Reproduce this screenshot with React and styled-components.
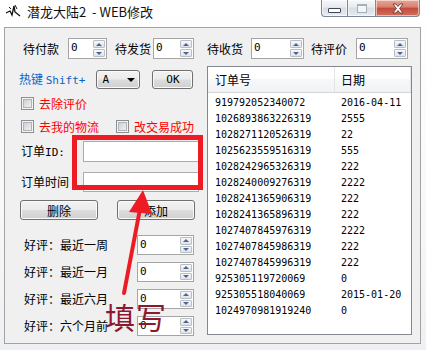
import styled, { createGlobalStyle } from "styled-components";

const GlobalStyle = createGlobalStyle`
  body {
    margin: 0;
    background: #ffffff;
    font-family: "Noto Sans CJK SC", "DejaVu Sans", sans-serif;
  }
`

const cjk = `"Noto Sans CJK SC", "DejaVu Sans", sans-serif`
const mono = `"DejaVu Sans Mono", "Liberation Mono", monospace`

const Window = styled.div`
  position: relative;
  width: 426px;
  height: 350px;
  overflow: hidden;
  display: flex;
  flex-direction: column;
  background: linear-gradient(#ffffff 0%, #f7f8fa 60%, #eef0f3 100%);
`

const TitleBar = styled.div`
  height: 27px;
  display: flex;
  align-items: flex-start;
  padding-left: 5px;
`

const Title = styled.div`
  margin-left: 6px;
  font-family: ${cjk};
  font-size: 13px;
  line-height: 24px;
  color: #111;
  text-shadow: 0 0 6px #fff;
  white-space: pre;
`

const Controls = styled.div`
  margin-left: auto;
  margin-right: 6px;
  display: flex;
  height: 17px;
`

const CtlBtn = styled.div`
  width: ${p => p.$w}px;
  height: 17px;
  box-sizing: border-box;
  display: flex;
  align-items: center;
  justify-content: center;
  border: 1px solid #7d8696;
  border-top: none;
  border-left-width: ${p => (p.$first ? 1 : 0)}px;
  border-radius: ${p => (p.$first ? "0 0 0 4px" : p.$close ? "0 0 4px 0" : "0")};
  background: ${p =>
    p.$close
      ? "linear-gradient(#e8a594 0%, #d7806f 45%, #c4493a 50%, #d1705c 100%)"
      : "linear-gradient(#f6f8fa 0%, #e6ebf0 45%, #d6dde5 50%, #e7ecf1 100%)"};
  box-shadow: inset 0 0 0 1px rgba(255, 255, 255, 0.55);
`

const MinGlyph = styled.span`
  width: 11px;
  height: 3px;
  margin-top: 5px;
  background: #fff;
  border: 1px solid #3c4656;
  border-radius: 1px;
`

const MaxGlyph = styled.span`
  width: 8px;
  height: 6px;
  border: 1px solid #a7afba;
  border-top-width: 2px;
  background: #f3f5f7;
`

const Client = styled.div`
  box-sizing: border-box;
  height: 317px;
  margin: 0 5px 0 4px;
  border: 1px solid #a3a3a3;
  background: #f0f0f0;
  display: flex;
  flex-direction: column;
`

const TopRow = styled.div`
  margin-top: 10px;
  padding-left: 18px;
  display: flex;
  align-items: center;
`

const Label = styled.span`
  font-family: ${cjk};
  font-size: 12px;
  line-height: 14px;
  color: ${p => p.$color || "#000"};
  margin-left: ${p => p.$ml || 0}px;
  width: ${p => (p.$w ? `${p.$w}px` : "auto")};
  white-space: pre;
  flex-shrink: 0;
`

const Mono = styled.span`
  font-family: ${mono};
  font-size: 11px;
`

const SpinBox = styled.div`
  box-sizing: border-box;
  width: ${p => p.$w}px;
  height: ${p => p.$h}px;
  margin-left: ${p => p.$ml || 0}px;
  border: 1px solid #a5a5a5;
  background: #fff;
  display: flex;
  flex-shrink: 0;
`

const SpinValue = styled.span`
  flex: 1;
  padding: 2px 0 0 2px;
  font-family: ${mono};
  font-size: 11px;
  line-height: 13px;
  color: #000;
`

const SpinBtns = styled.div`
  width: 12px;
  margin: 1px 1px 1px 0;
  display: flex;
  flex-direction: column;
  gap: 1px;
`

const SpinBtn = styled.div`
  flex: 1;
  box-sizing: border-box;
  border: 1px solid #b9bec6;
  border-radius: 1px;
  background: linear-gradient(#f7f8fa, #dfe3e8);
  display: flex;
  align-items: center;
  justify-content: center;
`

const Tri = styled.span`
  width: 0;
  height: 0;
  border-left: 3px solid transparent;
  border-right: 3px solid transparent;
  ${p => (p.$up ? "border-bottom: 3px solid #4a6595;" : "border-top: 3px solid #4a6595;")}
`

const Body = styled.div`
  margin-top: 7px;
  display: flex;
`

const LeftPane = styled.div`
  width: 202px;
  display: flex;
  flex-direction: column;
`

const Row = styled.div`
  display: flex;
  align-items: center;
  height: ${p => p.$h}px;
  margin-top: ${p => p.$mt || 0}px;
  padding-left: ${p => p.$pl || 0}px;
  gap: ${p => p.$gap || 0}px;
`

const WinButton = styled.div`
  box-sizing: border-box;
  width: ${p => p.$w}px;
  height: ${p => p.$h || 20}px;
  margin-left: ${p => p.$ml || 0}px;
  border: 1px solid #707070;
  border-radius: 3px;
  background: linear-gradient(#f2f2f2 0%, #ebebeb 48%, #dddddd 52%, #cfcfcf 100%);
  box-shadow: inset 0 0 0 1px #fafafa;
  display: flex;
  align-items: center;
  justify-content: center;
  font-family: ${cjk};
  font-size: 12px;
  color: #000;
  flex-shrink: 0;
`

const Combo = styled(WinButton)`
  justify-content: space-between;
  padding: 0 4px 0 5px;
  font-family: ${mono};
  font-size: 11px;
`

const ComboArrow = styled.span`
  width: 0;
  height: 0;
  border-left: 4px solid transparent;
  border-right: 4px solid transparent;
  border-top: 4px solid #000;
`

const CheckBox = styled.span`
  box-sizing: border-box;
  width: 13px;
  height: 13px;
  border: 1px solid #8e8f8f;
  background: #f4f4f4;
  display: flex;
  align-items: center;
  justify-content: center;
  flex-shrink: 0;
  margin-left: ${p => p.$ml || 0}px;

  &::after {
    content: "";
    box-sizing: border-box;
    width: 9px;
    height: 9px;
    border: 1px solid #b0b4ba;
    background: linear-gradient(135deg, #cfd2d6, #eeeff1);
  }
`

const TextInput = styled.div`
  box-sizing: border-box;
  width: 116px;
  height: ${p => p.$h}px;
  border: 1px solid ${p => (p.$focus ? "#7eb4ea" : "#abadb3")};
  background: #fff;
`

const ListView = styled.div`
  box-sizing: border-box;
  width: 205px;
  height: 269px;
  border: 1px solid #828790;
  background: #fff;
`

const Header = styled.div`
  display: flex;
  height: 26px;
  box-sizing: border-box;
  border-bottom: 1px solid #d5d5d5;
  background: linear-gradient(#ffffff 0%, #ffffff 45%, #f7f8f9 50%, #f1f2f4 100%);
`

const HeadCell = styled.div`
  box-sizing: border-box;
  width: ${p => p.$w}px;
  padding-left: ${p => p.$pl}px;
  border-right: 1px solid #e3e5e8;
  display: flex;
  align-items: center;
  font-family: ${cjk};
  font-size: 12px;
  color: #000;
`

const Rows = styled.div`
  padding-top: 1px;
`

const ItemRow = styled.div`
  display: flex;
  height: 16px;
  align-items: center;
  font-family: ${mono};
  font-size: 10px;
  color: #000;
`

const Cell = styled.span`
  box-sizing: border-box;
  width: ${p => p.$w}px;
  padding-left: ${p => p.$pl}px;
  white-space: pre;
`

const Overlay = styled.svg`
  position: absolute;
  left: 0;
  top: 0;
  pointer-events: none;
`

const Note = styled.div`
  position: absolute;
  left: 105px;
  top: 301px;
  font-family: ${cjk};
  font-size: 30px;
  line-height: 30px;
  color: #8c1830;
  letter-spacing: 1px;
`

const orders = [
  ["919792052340072", "2016-04-11"],
  ["1026893863226319", "2555"],
  ["1028271120526319", "22"],
  ["1025623559516319", "555"],
  ["1028242965326319", "222"],
  ["1028240009276319", "2222"],
  ["1028241365906319", "222"],
  ["1028241365896319", "222"],
  ["1027407845976319", "2222"],
  ["1027407845986319", "222"],
  ["1027407845996319", "222"],
  ["925305119720069", "0"],
  ["925305518040069", "2015-01-20"],
  ["1024970981919240", "0"],
]

const ratings = ["好评：最近一周", "好评：最近一月", "好评：最近六月", "好评：六个月前"]

function Spin({ w, h = 21, ml }) {
  return (
    <SpinBox $w={w} $h={h} $ml={ml}>
      <SpinValue>0</SpinValue>
      <SpinBtns>
        <SpinBtn><Tri $up /></SpinBtn>
        <SpinBtn><Tri /></SpinBtn>
      </SpinBtns>
    </SpinBox>
  )
}

function AppIcon() {
  return (
    <svg width="16" height="16" viewBox="0 0 16 16" style={{ marginTop: 3 }}>
      <rect width="16" height="16" fill="#fff" />
      <path d="M1 10 L5 8 L7 12 L9 3 L10 9 L15 13" stroke="#111" strokeWidth="1.3" fill="none" />
      <path d="M10 2 L12 6 M4 4 L6 6" stroke="#111" strokeWidth="1" fill="none" />
    </svg>
  )
}

export default function App() {
  return (
    <Window>
      <GlobalStyle />
      <TitleBar>
        <AppIcon />
        <Title>潜龙大陆2  - WEB修改</Title>
        <Controls>
          <CtlBtn $w={27} $first><MinGlyph /></CtlBtn>
          <CtlBtn $w={28}><MaxGlyph /></CtlBtn>
          <CtlBtn $w={44} $close>
            <svg width="14" height="11" viewBox="0 0 14 11">
              <path d="M2 1 L5 1 L7 3.5 L9 1 L12 1 L8.6 5.5 L12 10 L9 10 L7 7.5 L5 10 L2 10 L5.4 5.5 Z"
                fill="#fff" stroke="#5a2a24" strokeWidth="0.8" />
            </svg>
          </CtlBtn>
        </Controls>
      </TitleBar>

      <Client>
        <TopRow>
          <Label>待付款</Label>
          <Spin w={39} ml={9} />
          <Label $ml={8}>待发货</Label>
          <Spin w={41} ml={2} />
          <Label $ml={13}>待收货</Label>
          <Spin w={53} ml={8} />
          <Label $ml={7}>待评价</Label>
          <Spin w={52} ml={9} />
        </TopRow>

        <Body>
          <LeftPane>
            <Row $h={19} $mt={4} $pl={14}>
              <Label $color="#0a64c8">热键 <Mono>Shift+</Mono></Label>
              <Combo $w={44} $h={19} $ml={11}>A<ComboArrow /></Combo>
              <WinButton $w={41} $h={19} $ml={12}><Mono>OK</Mono></WinButton>
            </Row>

            <Row $h={13} $mt={8} $pl={16} $gap={5}>
              <CheckBox />
              <Label $color="#ff0000">去除评价</Label>
            </Row>

            <Row $h={13} $mt={10} $pl={16} $gap={5}>
              <CheckBox />
              <Label $color="#ff0000">去我的物流</Label>
              <CheckBox $ml={12} />
              <Label $color="#ff0000">改交易成功</Label>
            </Row>

            <Row $h={21} $mt={8} $pl={16}>
              <Label $w={62}>订单<Mono>ID:</Mono></Label>
              <TextInput $h={21} $focus />
            </Row>

            <Row $h={20} $mt={10} $pl={16}>
              <Label $w={62}>订单时间</Label>
              <TextInput $h={20} />
            </Row>

            <Row $h={20} $mt={8} $pl={15} $gap={19}>
              <WinButton $w={78}>删除</WinButton>
              <WinButton $w={78}>添加</WinButton>
            </Row>

            {ratings.map((r, i) => (
              <Row key={r} $h={20} $mt={i === 0 ? 15 : 7} $pl={19}>
                <Label $w={113}>{r}</Label>
                <Spin w={57} h={20} />
              </Row>
            ))}
          </LeftPane>

          <ListView>
            <Header>
              <HeadCell $w={127} $pl={7}>订单号</HeadCell>
              <HeadCell $w={76} $pl={6}>日期</HeadCell>
            </Header>
            <Rows>
              {orders.map(([id, date]) => (
                <ItemRow key={id}>
                  <Cell $w={127} $pl={7}>{id}</Cell>
                  <Cell $w={76} $pl={6}>{date}</Cell>
                </ItemRow>
              ))}
            </Rows>
          </ListView>
        </Body>
      </Client>

      <Overlay width="426" height="350" viewBox="0 0 426 350">
        <rect x="74.5" y="137.5" width="126" height="50" fill="none" stroke="#ed1c24" strokeWidth="5" />
        <path d="M124 293 L140 209" stroke="#ed1c24" strokeWidth="4" strokeLinecap="round" />
        <path d="M143 190 L129 212 L152 214 Z" fill="#ed1c24" />
      </Overlay>
      <Note>填写</Note>
    </Window>
  )
}
